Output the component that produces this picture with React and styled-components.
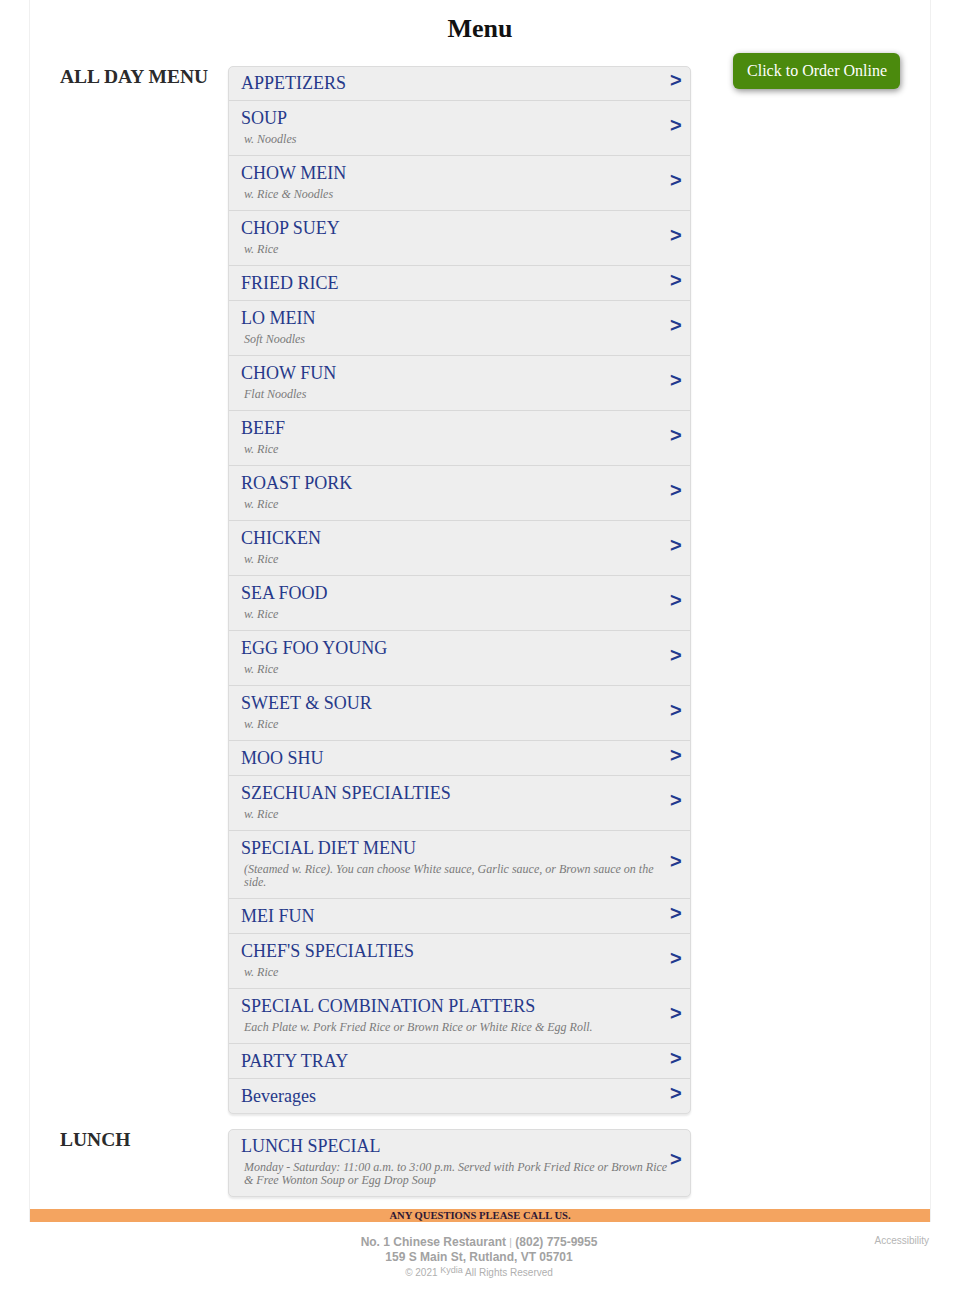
import React from "react";
import styled, { createGlobalStyle } from "styled-components";

const Global = createGlobalStyle`
  html, body { margin: 0; padding: 0; background: #fff; }
  body { font-family: "Liberation Serif", "Times New Roman", serif; color: #222; }
  * { box-sizing: border-box; }
`;

const Page = styled.div`
  width: 902px;
  margin: 0 auto;
  border-left: 1px solid #f0f0f0;
  border-right: 1px solid #f0f0f0;
`;

const Title = styled.h1`
  margin: 0;
  padding-top: 14px;
  font-size: 26px;
  line-height: 30px;
  font-weight: bold;
  text-align: center;
  color: #111;
`;

const Section = styled.section`
  display: grid;
  grid-template-columns: 168px 463px 1fr;
  padding: 0 30px 0 30px;
  margin-top: ${(p) => p.$top}px;
`;

const SectionLabel = styled.h2`
  margin: 0;
  font-size: 19.5px;
  line-height: 22px;
  font-weight: bold;
  color: #2b2b2b;
`;

const List = styled.div`
  background: #eeeeee;
  border: 1px solid #dcdcdc;
  border-radius: 5px;
  box-shadow: 0 2px 2px rgba(0, 0, 0, 0.09);
  overflow: hidden;
`;

const Row = styled.div`
  display: flex;
  align-items: center;
  padding: 6px 8px 6px 12px;
  &:first-child { padding-top: 5px; }
  &:not(:last-child) { border-bottom: 1px solid #d8d8d8; }
`;

const RowText = styled.div`
  flex: 1;
  min-width: 0;
`;

const ItemName = styled.div`
  font-size: 18px;
  line-height: 22px;
  color: #26398a;
`;

const ItemDesc = styled.div`
  font-size: 12px;
  line-height: 13px;
  font-style: italic;
  color: #7a7a7a;
  padding: 4px 0 3px 3px;
`;

const Arrow = styled.span`
  flex: none;
  width: 14px;
  padding-left: 2px;
  margin-bottom: 7px;
  font-family: "Liberation Sans", Arial, sans-serif;
  font-weight: bold;
  font-size: 20px;
  line-height: 14px;
  color: #22398e;
`;

const Aside = styled.div`
  display: flex;
  justify-content: flex-end;
  align-items: flex-start;
`;

const OrderButton = styled.button`
  margin-top: -13px;
  background: #4b8a0d;
  color: #fff;
  border: none;
  border-radius: 6px;
  padding: 9px 13px 9px 14px;
  font-family: "Liberation Serif", "Times New Roman", serif;
  font-size: 16px;
  line-height: 18px;
  box-shadow: 1px 2px 6px rgba(0, 0, 0, 0.45);
  cursor: pointer;
`;

const Band = styled.div`
  margin-top: 12px;
  background: #f4a460;
  height: 13px;
  text-align: center;
  font-size: 10.6px;
  line-height: 13px;
  font-weight: bold;
  color: #2e1834;
`;

const Footer = styled.footer`
  width: 902px;
  margin: 0 auto;
  display: grid;
  grid-template-columns: 1fr auto 1fr;
  padding: 13px 2px 0 0;
  font-family: "Liberation Sans", Arial, sans-serif;
`;

const FooterCenter = styled.div`
  grid-column: 2;
  text-align: center;
`;

const FooterLine = styled.div`
  font-size: 12px;
  line-height: 14px;
  font-weight: bold;
  color: #a2a2a2;
`;

const Pipe = styled.span`
  font-weight: normal;
  font-size: 10px;
  color: #bbb;
`;

const Copy = styled.div`
  margin-top: 2px;
  font-size: 10px;
  line-height: 14px;
  color: #b0b0b0;
`;

const Brand = styled.sup`
  font-size: 9px;
  line-height: 0;
  vertical-align: 3px;
`;

const Access = styled.div`
  justify-self: end;
  font-size: 10px;
  line-height: 12px;
  color: #b5b5b5;
`;

const allDay = [
  ["APPETIZERS"],
  ["SOUP", "w. Noodles"],
  ["CHOW MEIN", "w. Rice & Noodles"],
  ["CHOP SUEY", "w. Rice"],
  ["FRIED RICE"],
  ["LO MEIN", "Soft Noodles"],
  ["CHOW FUN", "Flat Noodles"],
  ["BEEF", "w. Rice"],
  ["ROAST PORK", "w. Rice"],
  ["CHICKEN", "w. Rice"],
  ["SEA FOOD", "w. Rice"],
  ["EGG FOO YOUNG", "w. Rice"],
  ["SWEET & SOUR", "w. Rice"],
  ["MOO SHU"],
  ["SZECHUAN SPECIALTIES", "w. Rice"],
  ["SPECIAL DIET MENU", "(Steamed w. Rice). You can choose White sauce, Garlic sauce, or Brown sauce on the side."],
  ["MEI FUN"],
  ["CHEF'S SPECIALTIES", "w. Rice"],
  ["SPECIAL COMBINATION PLATTERS", "Each Plate w. Pork Fried Rice or Brown Rice or White Rice & Egg Roll."],
  ["PARTY TRAY"],
  ["Beverages"],
];

const lunch = [
  ["LUNCH SPECIAL", "Monday - Saturday: 11:00 a.m. to 3:00 p.m. Served with Pork Fried Rice or Brown Rice & Free Wonton Soup or Egg Drop Soup"],
];

function MenuList({ items }) {
  return (
    <List>
      {items.map(([name, desc]) => (
        <Row key={name}>
          <RowText>
            <ItemName>{name}</ItemName>
            {desc && <ItemDesc>{desc}</ItemDesc>}
          </RowText>
          <Arrow>&gt;</Arrow>
        </Row>
      ))}
    </List>
  );
}

export default function App() {
  return (
    <>
      <Global />
      <Page>
        <Title>Menu</Title>
        <Section $top={22}>
          <SectionLabel>ALL DAY MENU</SectionLabel>
          <MenuList items={allDay} />
          <Aside>
            <OrderButton>Click to Order Online</OrderButton>
          </Aside>
        </Section>
        <Section $top={15}>
          <SectionLabel>LUNCH</SectionLabel>
          <MenuList items={lunch} />
          <div />
        </Section>
        <Band>ANY QUESTIONS PLEASE CALL US.</Band>
      </Page>
      <Footer>
        <FooterCenter>
          <FooterLine>
            No. 1 Chinese Restaurant <Pipe>|</Pipe> (802) 775-9955
          </FooterLine>
          <FooterLine>159 S Main St, Rutland, VT 05701</FooterLine>
          <Copy>
            © 2021 <Brand>Kydia</Brand> All Rights Reserved
          </Copy>
        </FooterCenter>
        <Access>Accessibility</Access>
      </Footer>
    </>
  );
}
